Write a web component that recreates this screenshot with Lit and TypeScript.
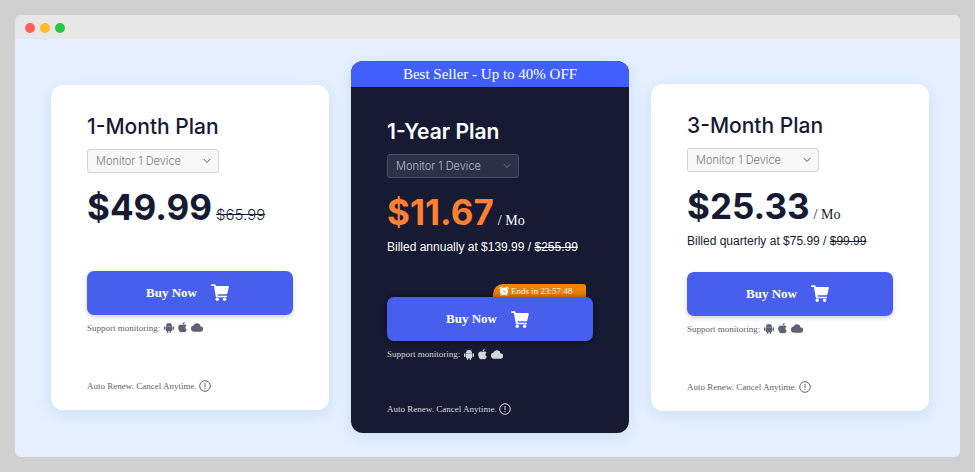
import { LitElement, html, css, nothing } from "lit";
import { customElement, property } from "lit/decorators.js";
import { classMap } from "lit/directives/class-map.js";

interface Plan {
  id: string;
  name: string;
  price: string;
  perMonth: boolean;
  oldPrice?: string;
  billed?: string;
  billedOld?: string;
  banner?: string;
  endsIn?: string;
}

const plans: Plan[] = [
  { id: "month", name: "1-Month Plan", price: "$49.99", perMonth: false, oldPrice: "$65.99" },
  {
    id: "year",
    name: "1-Year Plan",
    price: "$11.67",
    perMonth: true,
    billed: "Billed annually at $139.99 / ",
    billedOld: "$255.99",
    banner: "Best Seller - Up to 40% OFF",
    endsIn: "Ends in 23:57:48",
  },
  {
    id: "quarter",
    name: "3-Month Plan",
    price: "$25.33",
    perMonth: true,
    billed: "Billed quarterly at $75.99 / ",
    billedOld: "$99.99",
  },
];

const cartIcon = html`<svg width="18" height="17" viewBox="0 0 18 17" aria-hidden="true">
  <path fill="currentColor" d="M.8.2h2.900c.4 0 .8.3.900.7l.2 1.100H17c.6 0 1 .5.8 1.100l-1.500 6.300c-.1.500-.5.800-1 .800H6.500l.3 1.500h8.500c.5 0 .8.300.8.800s-.3.800-.8.800H5.600c-.4 0-.7-.3-.8-.7L2.900 2H.9C.3 2 0 1.600 0 1.100S.3.200.8.200z"/>
  <circle fill="currentColor" cx="6.200" cy="15.200" r="1.700"/><circle fill="currentColor" cx="13.600" cy="15.200" r="1.700"/>
</svg>`;

const androidIcon = html`<svg width="10" height="11" viewBox="0 0 20 22" aria-hidden="true">
  <path fill="currentColor" d="M5.500 1l1.500 2A6.500 6.500 0 0 1 13 3l1.500-2 .7.500-1.400 2A6 6 0 0 1 16.300 8H3.700a6 6 0 0 1 2.500-4.500l-1.400-2zM3.700 8.500h12.600v8.500c0 .8-.6 1.400-1.400 1.400H14v2.200a1.300 1.300 0 0 1-2.600 0v-2.200H8.600v2.200a1.300 1.300 0 0 1-2.600 0v-2.200h-.9c-.8 0-1.400-.6-1.400-1.400z"/>
  <rect fill="currentColor" x="0" y="8.500" width="2.800" height="7.500" rx="1.400"/><rect fill="currentColor" x="17.200" y="8.500" width="2.800" height="7.500" rx="1.400"/>
</svg>`;

const appleIcon = html`<svg width="9" height="11" viewBox="0 0 384 480" aria-hidden="true">
  <path fill="currentColor" d="M319 237c0-37 16-65 50-85-19-27-47-42-85-45-35-3-74 21-88 21-15 0-49-20-76-20C64 109 4 153 4 242c0 27 5 54 14 82 13 37 59 127 107 125 25-1 43-18 76-18 32 0 48 18 76 18 49-1 90-83 102-119-65-31-60-90-60-93zM262 73c27-32 25-62 24-73-24 1-52 16-68 35-17 20-28 44-25 72 26 2 50-12 69-34z"/>
</svg>`;

const cloudIcon = html`<svg width="12" height="9" viewBox="0 0 24 18" aria-hidden="true">
  <path fill="currentColor" d="M19.300 7A7.500 7.500 0 0 0 5 5 6.300 6.300 0 0 0 6 17.500h13a5.200 5.200 0 0 0 .3-10.500z"/>
</svg>`;

const infoIcon = html`<svg width="12" height="12" viewBox="0 0 12 12" aria-hidden="true">
  <circle cx="6" cy="6" r="5.300" fill="none" stroke="currentColor"/>
  <path d="M6 3v4M6 8v1" stroke="currentColor" fill="none"/>
</svg>`;

const clockIcon = html`<svg width="10" height="10" viewBox="0 0 20 20" aria-hidden="true">
  <circle cx="10" cy="11" r="8" fill="currentColor"/>
  <path d="M1.500 4.500l3-2.500M18.500 4.500l-3-2.500M4.500 17.500L3.500 19M15.500 17.500l1 1.500" stroke="currentColor" stroke-width="2.400" stroke-linecap="round"/>
  <path d="M10 7.500V11.500h3" stroke="#f08205" stroke-width="1.400" fill="none"/>
</svg>`;

@customElement("plan-card")
export class PlanCard extends LitElement {
  @property({ attribute: false }) plan!: Plan;

  static styles = css`
    :host {
      display: block;
      min-width: 0;
    }
    .card {
      border-radius: 12px;
      overflow: hidden;
      background: #ffffff;
      color: #161a33;
      box-shadow: 0 4px 16px rgba(70, 120, 190, 0.14);
    }
    .banner {
      background: #415ffb;
      color: #ffffff;
      text-align: center;
      font-size: 15px;
      line-height: 26px;
    }
    .body {
      padding: 26px 36px 16px;
    }
    .title {
      margin: 0 0 6px;
      font-family: Inter, "Open Sans", sans-serif;
      font-weight: 500;
      font-size: 21px;
      line-height: 32px;
      white-space: nowrap;
    }
    .picker {
      display: grid;
      width: 132px;
      align-items: center;
    }
    .devices {
      grid-area: 1 / 1;
      appearance: none;
      box-sizing: border-box;
      width: 100%;
      height: 24px;
      margin: 0;
      padding: 0 24px 0 8px;
      border: 1px solid #d2d3d6;
      border-radius: 3px;
      background: #f8f8f8;
      color: #777983;
      font-family: Inter, "Open Sans", sans-serif;
      font-weight: 300;
      font-size: 11px;
    }
    .chevron {
      grid-area: 1 / 1;
      justify-self: end;
      margin-right: 8px;
      color: #555866;
      pointer-events: none;
    }
    .cost {
      display: flex;
      align-items: baseline;
      gap: 4px;
      margin: 17px 0 0;
      line-height: 34px;
      white-space: nowrap;
    }
    .price {
      font-family: Inter, "Open Sans", sans-serif;
      font-weight: 700;
      font-size: 35px;
    }
    .unit {
      font-size: 14px;
    }
    .was {
      font-family: Inter, "Open Sans", sans-serif;
      font-weight: 300;
      font-size: 15px;
    }
    .billed {
      min-height: 17px;
      margin: 0;
      font-family: "Liberation Sans", Arial, sans-serif;
      font-size: 12px;
      line-height: 18px;
      white-space: nowrap;
    }
    .action {
      position: relative;
      margin-top: 22px;
    }
    .buy {
      display: flex;
      position: relative;
      align-items: center;
      justify-content: center;
      gap: 14px;
      width: 100%;
      height: 44px;
      padding: 0 5px 0 0;
      border: 0;
      border-radius: 7px;
      background: #485fee;
      color: #ffffff;
      font-family: "Liberation Serif", serif;
      font-weight: 700;
      font-size: 13px;
      box-shadow: 0 2px 4px rgba(30, 20, 40, 0.2);
      cursor: pointer;
    }
    .timer {
      position: absolute;
      right: 7px;
      bottom: 100%;
      display: flex;
      align-items: center;
      gap: 2px;
      box-sizing: border-box;
      width: 93px;
      height: 13px;
      padding-left: 6px;
      border-radius: 10px 3px 0 0;
      background: #f08205;
      color: #ffffff;
      font-size: 9px;
      line-height: 12px;
      white-space: nowrap;
    }
    .support,
    .renew {
      display: flex;
      align-items: center;
      margin: 0;
      color: #5f6273;
      font-size: 9px;
      line-height: 16px;
      white-space: nowrap;
    }
    .support {
      gap: 4px;
      margin-top: 5px;
    }
    .renew {
      gap: 2px;
      margin-top: 42px;
    }
    .featured {
      background: #161a33;
      color: #ffffff;
    }
    .featured .body {
      padding-top: 29px;
    }
    .featured .title {
      font-weight: 600;
    }
    .featured .devices {
      border-color: #4b4e61;
      background: #2d3047;
      color: #b9bac2;
    }
    .featured .chevron {
      color: #6d7082;
    }
    .featured .price {
      color: #ff7f33;
    }
    .featured .action {
      margin-top: 41px;
    }
    .featured .buy {
      box-shadow: 0 0 6px rgba(0, 0, 0, 0.5);
    }
    .featured .support,
    .featured .renew {
      color: #d5d6da;
    }
    .featured .renew {
      margin-top: 39px;
    }
  `;

  render() {
    const p = this.plan;
    return html`<article class=${classMap({ card: true, featured: !!p.banner })}>
      ${p.banner ? html`<div class="banner">${p.banner}</div>` : nothing}
      <div class="body">
        <h2 class="title">${p.name}</h2>
        <div class="picker">
          <select class="devices" id="devices-${p.id}" aria-label="Devices for ${p.name}">
            <option>Monitor 1 Device</option>
          </select>
          <svg class="chevron" width="8" height="6" viewBox="0 0 8 6" aria-hidden="true">
            <path d="M.7 1L4 4.500 7.300 1" fill="none" stroke="currentColor" />
          </svg>
        </div>
        <p class="cost">
          <span class="price">${p.price}</span>
          ${p.perMonth ? html`<span class="unit">/ Mo</span>` : nothing}
          ${p.oldPrice ? html`<s class="was">${p.oldPrice}</s>` : nothing}
        </p>
        <p class="billed">${p.billed ? html`${p.billed}<s>${p.billedOld}</s>` : nothing}</p>
        <div class="action">
          ${p.endsIn ? html`<div class="timer">${clockIcon}<span>${p.endsIn}</span></div>` : nothing}
          <button class="buy" type="button"><span>Buy Now</span>${cartIcon}</button>
        </div>
        <p class="support"><span>Support monitoring:</span>${androidIcon}${appleIcon}${cloudIcon}</p>
        <p class="renew"><span>Auto Renew. Cancel Anytime.</span>${infoIcon}</p>
      </div>
    </article>`;
  }
}

@customElement("app-root")
export class AppRoot extends LitElement {
  static styles = css`
    :host {
      display: flex;
      box-sizing: border-box;
      min-height: 100vh;
      padding: 15px;
      border-right: 2px solid #ffffff;
      background: #d0d0d0;
      font-family: "Liberation Serif", "Times New Roman", serif;
    }
    .window {
      flex: 1;
      display: flex;
      flex-direction: column;
      min-width: 0;
      overflow: hidden;
      border-radius: 6px;
      background: #e4f0fe;
    }
    .titlebar {
      display: flex;
      align-items: center;
      gap: 5px;
      height: 24px;
      padding: 0 10px;
      background: #e7e7e7;
    }
    .dot {
      width: 10px;
      height: 10px;
      margin-top: 2px;
      border-radius: 50%;
    }
    .close {
      background: #ff5f57;
    }
    .minimize {
      background: #febc2e;
    }
    .zoom {
      background: #28c840;
    }
    .plans {
      flex: 1;
      display: grid;
      grid-template-columns: repeat(3, minmax(0, 1fr));
      gap: 22px;
      align-items: center;
      padding: 22px 31px 24px 36px;
    }
  `;

  render() {
    return html`<main class="window">
      <div class="titlebar">
        <span class="dot close"></span><span class="dot minimize"></span><span class="dot zoom"></span>
      </div>
      <section class="plans">${plans.map((p) => html`<plan-card .plan=${p}></plan-card>`)}</section>
    </main>`;
  }
}
